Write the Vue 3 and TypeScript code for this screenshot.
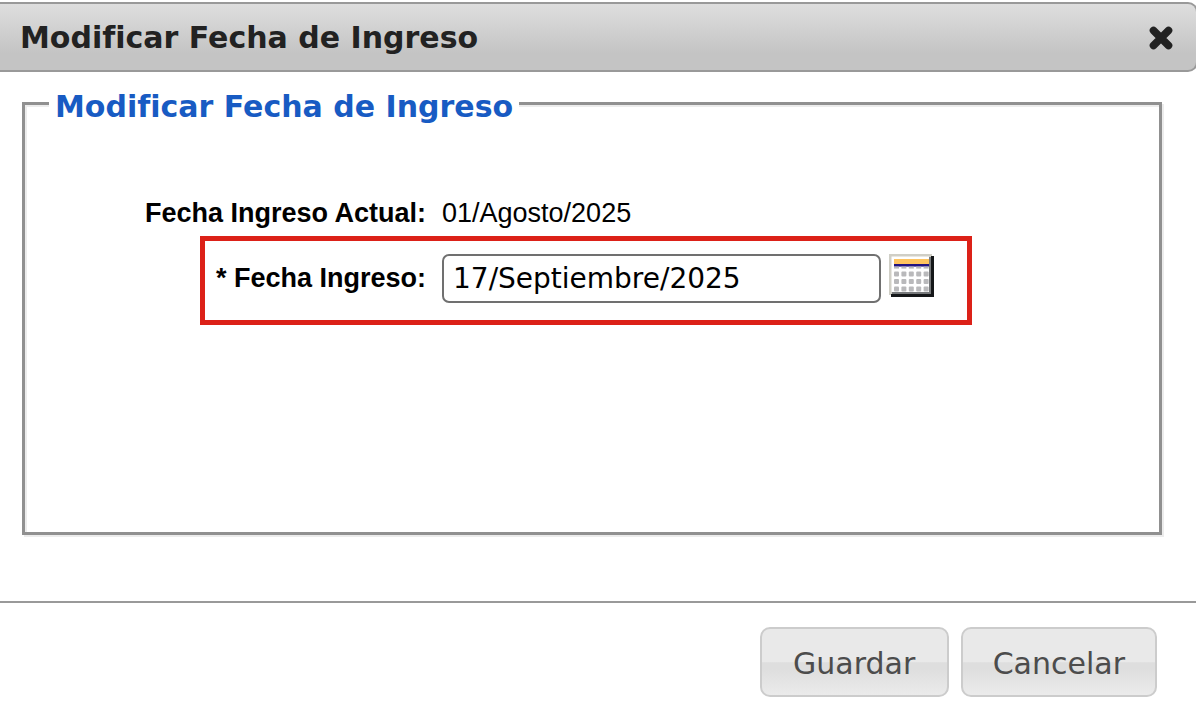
<script setup lang="ts">
import { ref } from 'vue'

const title = 'Modificar Fecha de Ingreso'
const currentDate = '01/Agosto/2025'
const newDate = ref('17/Septiembre/2025')

const columns = [0, 1, 2, 3, 4]
const rows = [0, 1, 2, 3]
</script>

<template>
  <form class="dialog" role="dialog" aria-labelledby="dialog-title" @submit.prevent>
    <header class="titlebar">
      <h1 id="dialog-title">{{ title }}</h1>
      <button type="button" class="close" aria-label="Cerrar">
        <svg width="24" height="24" viewBox="0 0 24 24">
          <path d="M4.5 4.5 19.5 19.5M19.5 4.5 4.5 19.5" stroke="#222" stroke-width="7.6" stroke-linecap="round" />
        </svg>
      </button>
    </header>

    <main class="content">
      <fieldset>
        <legend>{{ title }}</legend>
        <div class="row">
          <span class="label current">Fecha Ingreso Actual:</span>
          <span>{{ currentDate }}</span>
        </div>
        <div class="row highlighted">
          <label class="label" for="entry-date">* Fecha Ingreso:</label>
          <input id="entry-date" v-model="newDate" type="text" />
          <button type="button" class="picker" aria-label="Elegir fecha">
            <svg width="46" height="44" viewBox="0 0 46 44">
              <rect width="43" height="41" fill="#d0cfc6" />
              <path d="M42 2H45V43H2V40H42Z" fill="#151719" />
              <path d="M40 3H42V40H3V38H40Z" fill="#77797b" />
              <rect x="2.5" y="2.5" width="37.5" height="35.5" fill="#fff" />
              <rect x="5" y="5" width="35" height="5" fill="#ffc45f" />
              <rect x="5" y="10" width="35" height="2.6" fill="#221482" />
              <rect v-for="c in columns" :key="c" :x="5 + c * 7.4" y="12.6" width="5" height="2" fill="#b9b9bb" />
              <template v-for="r in rows.slice(0, 3)" :key="r">
                <rect
                  v-for="c in columns"
                  :key="c"
                  :x="5 + c * 7.4"
                  :y="17.6 + r * 7.4"
                  width="5"
                  height="5"
                  rx="1"
                  fill="#b9b9bb"
                />
              </template>
            </svg>
          </button>
        </div>
      </fieldset>
    </main>

    <footer class="actions">
      <button type="submit">Guardar</button>
      <button type="button">Cancelar</button>
    </footer>
  </form>
</template>

<style>
body {
  margin: 0;
  background: #fff;
}
</style>

<style scoped>
.dialog {
  overflow: hidden;
  padding-top: 2px;
  font-family: Verdana, "DejaVu Sans", sans-serif;
  font-variant-ligatures: none;
  color: #000;
}

.dialog * {
  box-sizing: border-box;
}

.titlebar {
  display: flex;
  align-items: center;
  justify-content: space-between;
  height: 70px;
  margin-right: -2px;
  padding: 2px 23px 0 20px;
  border: 2px solid #999;
  border-left: 0;
  border-radius: 0 10px 10px 0;
  background: linear-gradient(#dedede, #c4c4c4 75%, #c4c4c4);
}

h1 {
  margin: 0;
  font-size: 30px;
  line-height: 36px;
  color: #222;
}

button {
  font-family: inherit;
  cursor: pointer;
}

.close,
.picker {
  display: flex;
  padding: 0;
  border: 0;
  background: none;
}

.content {
  padding: 12px 34px 66px 22px;
}

fieldset {
  min-height: 451px;
  margin: 0;
  padding: 72px 0 0;
  border: 3px solid #909090;
  box-shadow: 2px 2px 0 #ececec, inset 2px 2px 0 #ececec;
}

legend {
  margin-left: 24px;
  padding: 7px 6px 0;
  background: #fff;
  font-size: 30px;
  font-weight: bold;
  line-height: 32px;
  color: #185bc3;
}

.row {
  display: flex;
  gap: 16px;
  font-family: Arial, "Liberation Sans", sans-serif;
  font-size: 27px;
  line-height: 36px;
}

.label {
  flex: none;
  font-weight: bold;
  text-align: right;
  white-space: nowrap;
}

.current {
  width: 401px;
}

.highlighted {
  width: fit-content;
  margin: 5px 0 0 175px;
  padding: 13px 32px 17px 8px;
  border: 5px solid #dc2118;
}

.highlighted .label {
  width: 213px;
  padding-top: 6px;
}

input {
  width: 439px;
  height: 49px;
  padding: 0 9px;
  border: 2px solid #707070;
  border-radius: 7px;
  background: #fff;
  font-family: Verdana, "DejaVu Sans", sans-serif;
  font-size: 28px;
  color: #000;
}

.picker {
  align-self: flex-start;
  margin-left: -8px;
}

.actions {
  display: flex;
  justify-content: flex-end;
  gap: 12px;
  padding: 24px 39px 24px;
  border-top: 2px solid #999;
}

.actions button {
  min-width: 189px;
  height: 70px;
  padding: 2px 30px 0;
  border: 2px solid #ccc;
  border-radius: 10px;
  background: linear-gradient(#e9e9e9 50%, #dedede 51%, #dedede 60%, #ebebeb);
  font-size: 30px;
  color: #4c4c4c;
}
</style>
